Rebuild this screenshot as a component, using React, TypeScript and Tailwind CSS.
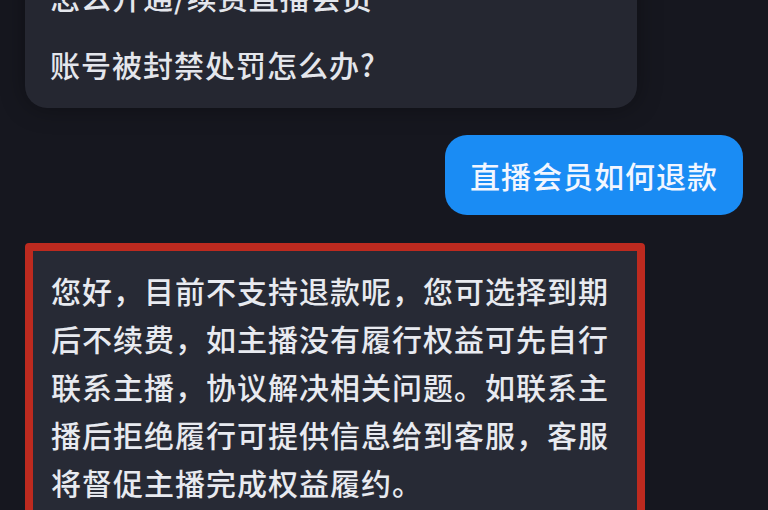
import React from "react";

const font = { fontFamily: '"Noto Sans CJK SC", "Noto Sans", sans-serif' };

export default function App() {
  return (
    <div
      className="h-[510px] w-[768px] overflow-hidden bg-[#16171f] px-[25px] text-[30px] font-medium leading-[48px] tracking-[1px]"
      style={font}
    >
      {/* Suggested questions */}
      <div className="-mt-[46px] mr-[106px] flex flex-col gap-[20px] rounded-[22px] bg-[#252731] px-[25px] pb-[20px] pt-[18px] text-[#e4e6ec] shadow-[0_0_24px_rgba(0,0,0,0.35)]">
        <p>怎么开通/续费直播会员</p>
        <p>账号被封禁处罚怎么办?</p>
      </div>

      {/* User message */}
      <div className="mt-[27px] flex justify-end">
        <div className="flex h-[80px] items-center rounded-[22px] bg-[#1a8cf4] px-[25px] text-[#f2f6ff]">
          直播会员如何退款
        </div>
      </div>

      {/* Reply, outlined in red */}
      <div className="mt-[28px] w-[620px] rounded-[4px] border-[8px] border-[#bd2a1f] bg-[#272a35] pb-[20px] pl-[18px] pr-[16px] pt-[15px] text-[#e8eaf0]">
        <p className="w-[570px]">
          您好，目前不支持退款呢，您可选择到期后不续费，如主播没有履行权益可先自行联系主播，协议解决相关问题。如联系主播后拒绝履行可提供信息给到客服，客服将督促主播完成权益履约。
        </p>
      </div>
    </div>
  );
}
